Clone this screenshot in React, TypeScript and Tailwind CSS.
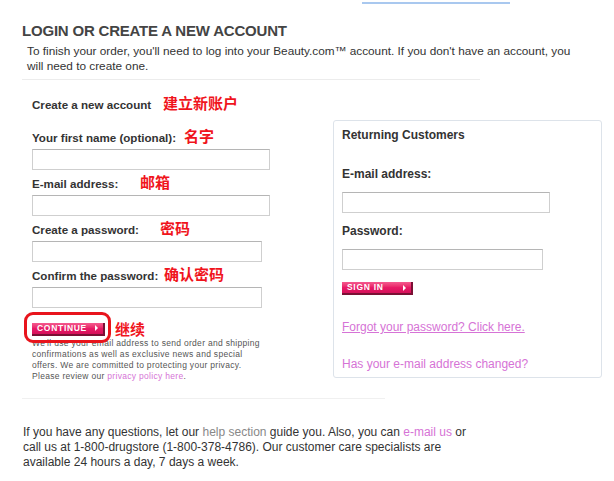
import type { ReactNode } from "react"

const cjk = "font-['Noto_Sans_CJK_SC',sans-serif] font-bold text-[#f0141c]"

// label text sits in a fixed box so the chinese note lands where it does in the shot
function Label({ children, note, w }: { children: ReactNode; note: string; w: string }) {
  return (
    <div className="flex items-end h-[18px]">
      <span className={`${w} shrink-0 text-[11.6px] font-bold text-[#333] leading-[14px]`}>{children}</span>
      <span className={`${cjk} text-[15px] leading-[18px]`}>{note}</span>
    </div>
  )
}

function Field({ w }: { w: string }) {
  return <div className={`h-[21px] ${w} border border-[#cfcfcf] border-t-[#b5b5b5] bg-white`} />
}

function PinkButton({ text, w }: { text: string; w: string }) {
  return (
    <div
      className={`${w} h-[13px] flex items-center justify-between pl-[5px] pr-[5px] bg-gradient-to-b from-[#f4588e] via-[#e81a66] to-[#d6105a] border-r-2 border-b-2 border-r-[#7a1034] border-b-[#7a1034]`}
    >
      <span className="text-[8.5px] font-bold text-white tracking-[0.7px] leading-none">{text}</span>
      <span className="w-0 h-0 border-y-[3px] border-y-transparent border-l-[3px] border-l-white" />
    </div>
  )
}

export default function App() {
  return (
    <div className="relative w-[614px] h-[481px] bg-white font-['Liberation_Sans',Arial,sans-serif] text-[#333] overflow-hidden">
      <div className="absolute left-[362px] top-[2px] w-[148px] h-[2px] bg-[#a9c8ef]" />

      <div className="pl-[22px] pt-[22px]">
        <h1 className="text-[15px] font-bold text-[#444] leading-[17px] tracking-[-0.2px]">
          LOGIN OR CREATE A NEW ACCOUNT
        </h1>
        <p className="ml-[5px] mt-[5px] text-[11.8px] leading-[15px] w-[552px] text-[#333]">
          To finish your order, you'll need to log into your Beauty.com™ account. If you don't have an account, you
          will need to create one.
        </p>
        <div className="mt-[5px] w-[458px] h-px bg-[#ececec]" />

        <div className="flex mt-[14px]">
          <div className="pl-[10px] w-[311px]">
            <div className="flex items-end h-[18px]">
              <span className="w-[131px] shrink-0 text-[11.6px] text-[#333] leading-[14px] font-bold">
                Create a new account
              </span>
              <span className={`${cjk} text-[15px] leading-[18px]`}>建立新账户</span>
            </div>

            <div className="mt-[15px]">
              <Label note="名字" w="w-[152px]">Your first name (optional):</Label>
            </div>
            <div className="mt-[4px]"><Field w="w-[238px]" /></div>

            <div className="mt-[3px]">
              <Label note="邮箱" w="w-[108px]">E-mail address:</Label>
            </div>
            <div className="mt-[4px]"><Field w="w-[238px]" /></div>

            <div className="mt-[3px]">
              <Label note="密码" w="w-[128px]">Create a password:</Label>
            </div>
            <div className="mt-[4px]"><Field w="w-[230px]" /></div>

            <div className="mt-[3px]">
              <Label note="确认密码" w="w-[132px]">Confirm the password:</Label>
            </div>
            <div className="mt-[4px]"><Field w="w-[230px]" /></div>

            <div className="relative flex items-center mt-[14px] h-[14px]">
              <PinkButton text="CONTINUE" w="w-[73px]" />
              <span className={`${cjk} text-[15px] leading-[18px] ml-[10px]`}>继续</span>
              <div className="absolute left-[-8px] top-[-10px] w-[87px] h-[31px] rounded-[9px] border-[3px] border-[#e8141c]" />
            </div>

            <p className="mt-[2px] w-[235px] text-[8.5px] leading-[11px] tracking-[0.3px] text-[#555]">
              We'll use your email address to send order and shipping confirmations as well as exclusive news and special
              offers. We are committed to protecting your privacy. Please review our{" "}
              <span className="text-[#d673d6]">privacy policy here</span>.
            </p>
          </div>

          <div className="w-[269px] h-[258px] mt-[26px] border border-[#dde3ea] rounded-[3px] px-[8px] pt-[7px]">
            <div className="text-[12px] font-bold text-[#333] leading-[14px]">Returning Customers</div>
            <div className="mt-[25px] text-[12px] font-bold text-[#333] leading-[14px]">E-mail address:</div>
            <div className="mt-[11px]"><Field w="w-[208px]" /></div>
            <div className="mt-[11px] text-[12px] font-bold text-[#333] leading-[14px]">Password:</div>
            <div className="mt-[11px]"><Field w="w-[201px]" /></div>
            <div className="mt-[12px]"><PinkButton text="SIGN IN" w="w-[71px]" /></div>
            <div className="mt-[25px] text-[12px] leading-[14px] text-[#d673d6] underline">
              Forgot your password? Click here.
            </div>
            <div className="mt-[23px] text-[12px] leading-[14px] text-[#d673d6]">Has your e-mail address changed?</div>
          </div>
        </div>

        <div className="absolute left-[22px] top-[398px] w-[363px] h-px bg-[#f0f0f0]" />
        <p className="absolute left-[23px] top-[425px] w-[448px] text-[12px] leading-[15px] text-[#333]">
          If you have any questions, let our <span className="text-[#888]">help section</span> guide you. Also, you can{" "}
          <span className="text-[#d673d6]">e-mail us</span> or call us at 1-800-drugstore (1-800-378-4786). Our customer
          care specialists are available 24 hours a day, 7 days a week.
        </p>
      </div>
    </div>
  )
}
